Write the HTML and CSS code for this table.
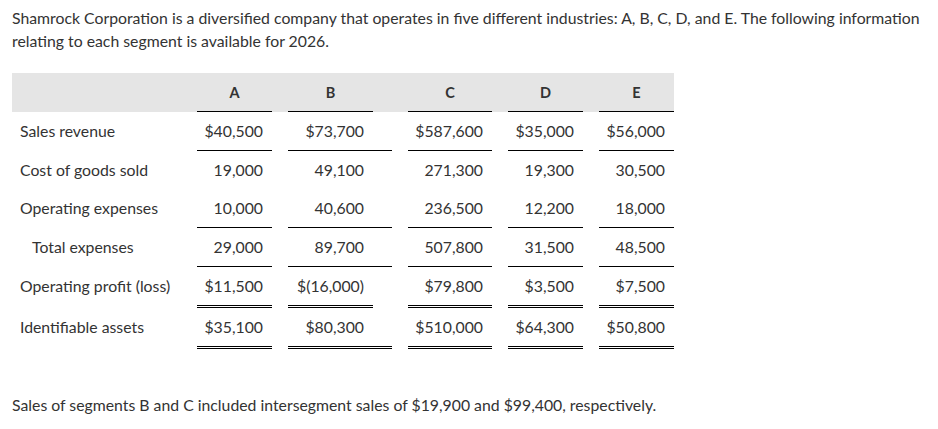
FILE: index.html
```html
<!DOCTYPE html>
<html>
<head>
<meta charset="utf-8">
<link rel="stylesheet" href="styles.css">
</head>
<body>
<div class="page">
  <p class="intro">Shamrock Corporation is a diversified company that operates in five different industries: A, B, C, D, and E. The following information relating to each segment is available for 2026.</p>
  <table class="seg">
    <colgroup>
      <col class="c-label"><col class="c-a"><col class="c-gap"><col class="c-b"><col class="c-bx"><col class="c-gap"><col class="c-c"><col class="c-gap"><col class="c-d"><col class="c-gap"><col class="c-e">
    </colgroup>
    <tr class="head">
      <th></th><th class="u">A</th><th></th><th class="u">B</th><th></th><th></th><th class="u">C</th><th></th><th class="u">D</th><th></th><th class="u">E</th>
    </tr>
    <tr class="line">
      <td class="lbl">Sales revenue</td><td class="num u">$40,500</td><td></td><td class="num u">$73,700</td><td class="u"></td><td></td><td class="num u">$587,600</td><td></td><td class="num u">$35,000</td><td></td><td class="num u">$56,000</td>
    </tr>
    <tr>
      <td class="lbl">Cost of goods sold</td><td class="num">19,000</td><td></td><td class="num">49,100</td><td></td><td></td><td class="num">271,300</td><td></td><td class="num">19,300</td><td></td><td class="num">30,500</td>
    </tr>
    <tr class="line">
      <td class="lbl">Operating expenses</td><td class="num u">10,000</td><td></td><td class="num u">40,600</td><td class="u"></td><td></td><td class="num u">236,500</td><td></td><td class="num u">12,200</td><td></td><td class="num u">18,000</td>
    </tr>
    <tr class="line">
      <td class="lbl indent">Total expenses</td><td class="num u">29,000</td><td></td><td class="num u">89,700</td><td class="u"></td><td></td><td class="num u">507,800</td><td></td><td class="num u">31,500</td><td></td><td class="num u">48,500</td>
    </tr>
    <tr class="dbl">
      <td class="lbl">Operating profit (loss)</td><td class="num u">$11,500</td><td></td><td class="num u">$(16,000)</td><td></td><td></td><td class="num u">$79,800</td><td></td><td class="num u">$3,500</td><td></td><td class="num u">$7,500</td>
    </tr>
    <tr class="dbl">
      <td class="lbl">Identifiable assets</td><td class="num u">$35,100</td><td></td><td class="num u">$80,300</td><td class="u"></td><td></td><td class="num u">$510,000</td><td></td><td class="num u">$64,300</td><td></td><td class="num u">$50,800</td>
    </tr>
  </table>
  <p class="note">Sales of segments B and C included intersegment sales of $19,900 and $99,400, respectively.</p>
</div>
</body>
</html>
```
FILE: styles.css
```css
* { box-sizing: border-box; }
html, body { margin: 0; padding: 0; background: #fff; }
body {
  font-family: Lato, "Open Sans", sans-serif;
  font-size: 15.8px;
  color: #333;
}
.page { padding: 6px 12px 0 12px; }
.intro { margin: 0; line-height: 23px; }
.seg {
  margin-top: 21px;
  border-collapse: separate;
  border-spacing: 0;
  table-layout: fixed;
  width: 662px;
}
.c-label { width: 185px; }
.c-a { width: 75px; }
.c-gap { width: 16px; }
.c-b { width: 85px; }
.c-bx { width: 19px; }
.c-c { width: 84px; }
.c-d { width: 75px; }
.c-e { width: 75px; }
.seg th, .seg td {
  padding: 0 0 2px 0;
  height: 38px;
  vertical-align: middle;
  white-space: nowrap;
}
.head th {
  background: #e5e5e5;
  font-weight: 700;
  font-size: 14.5px;
  text-align: center;
  height: 39px;
  padding-bottom: 0;
  border-bottom: 1px solid #e5e5e5;
}
.head th.u { border-bottom-color: #000; }
.line td { height: 39px; border-bottom: 1px solid transparent; }
.line td.u { border-bottom-color: #000; }
.dbl td { height: 41px; border-bottom: 3px double transparent; }
.dbl td.u { border-bottom-color: #000; }
.lbl { padding-left: 8px !important; text-align: left; }
.lbl.indent { padding-left: 20px !important; }
.num { text-align: right; padding-right: 9px !important; }
.note { margin: 44px 0 0 0; line-height: 23px; }
```
